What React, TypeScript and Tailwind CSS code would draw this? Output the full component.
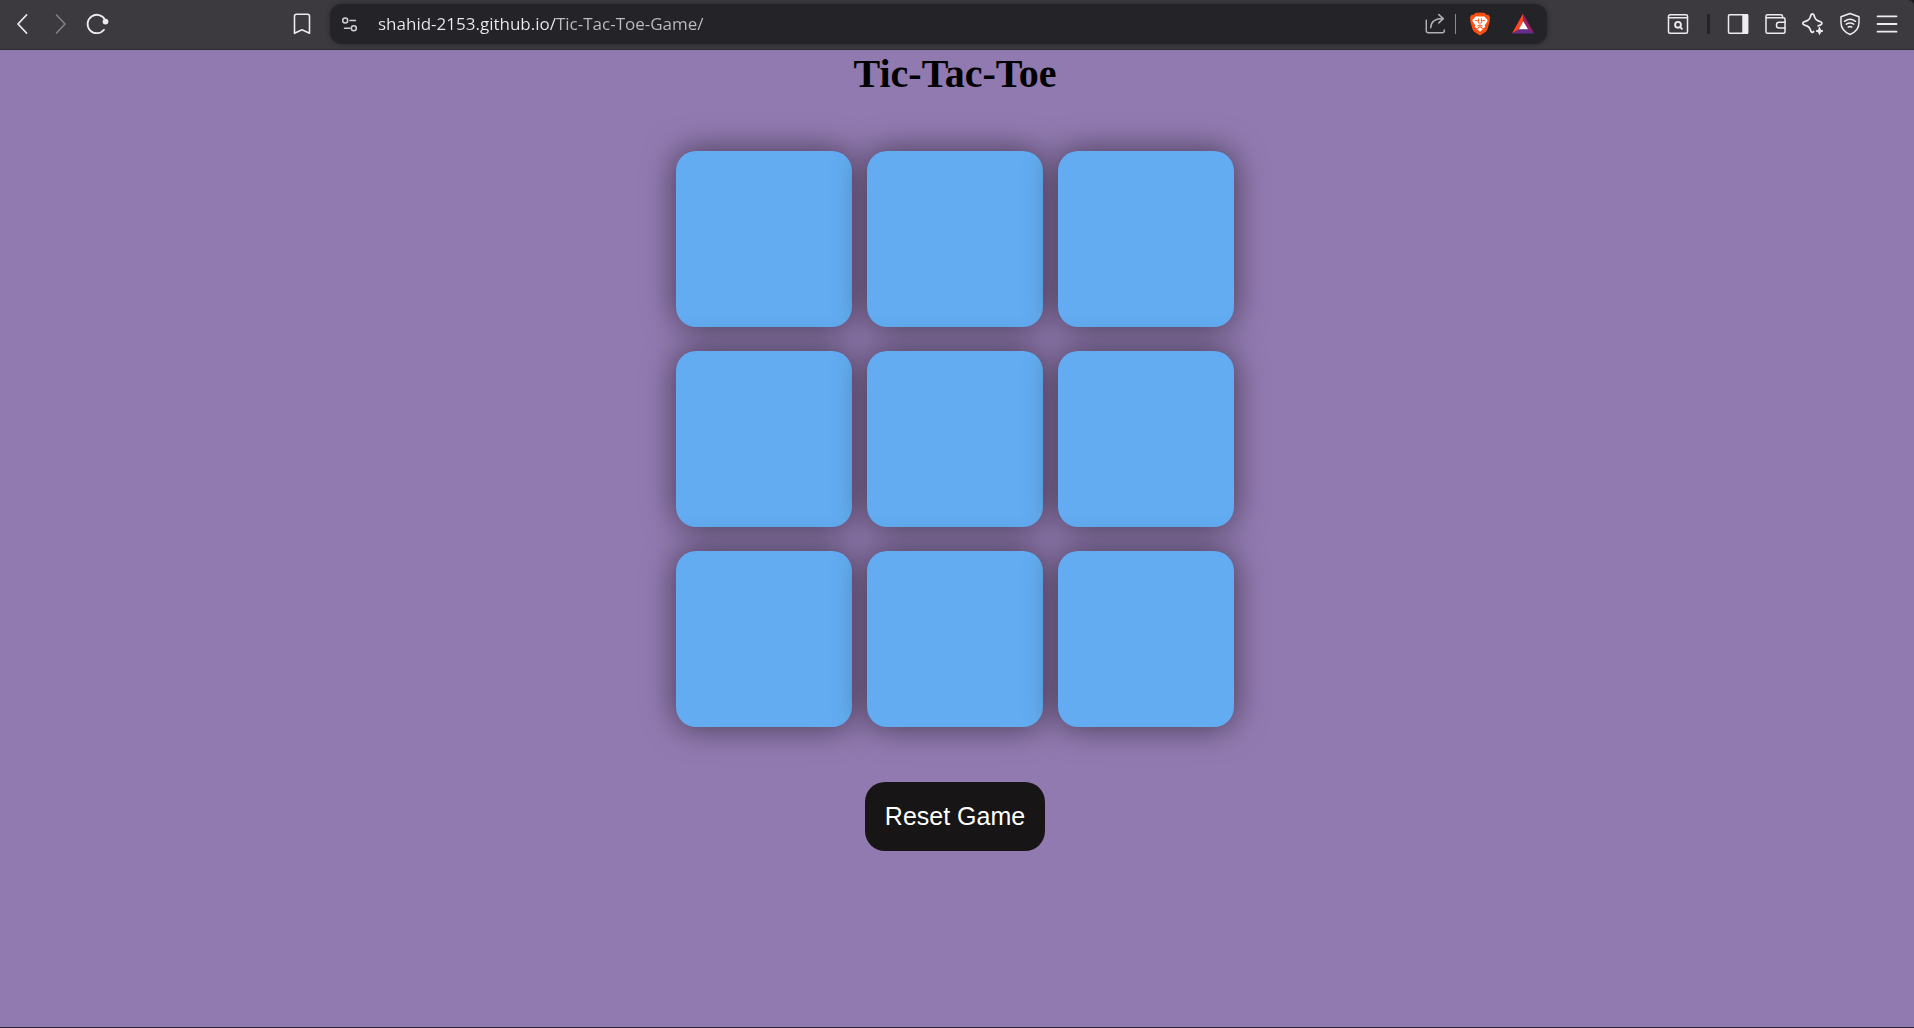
import { useState } from 'react'
import type { ReactNode } from 'react'

const WINS = [
  [0, 1, 2], [3, 4, 5], [6, 7, 8],
  [0, 3, 6], [1, 4, 7], [2, 5, 8],
  [0, 4, 8], [2, 4, 6],
]

function Icon({ children, stroke = 1.5 }: { children: ReactNode; stroke?: number }) {
  return (
    <svg
      viewBox="0 0 24 24"
      className="size-6 shrink-0 fill-none stroke-current"
      strokeWidth={stroke}
      strokeLinecap="round"
      strokeLinejoin="round"
      aria-hidden
    >
      {children}
    </svg>
  )
}

function IconButton({ label, className = '', children }: { label: string; className?: string; children: ReactNode }) {
  return (
    <button type="button" aria-label={label} className={className}>
      {children}
    </button>
  )
}

function AddressBar() {
  return (
    <div className="flex h-10 min-w-0 flex-1 items-center rounded-xl bg-[#242328] pr-3 pl-2 text-[#d0d0d5] shadow-[0_0_5px_#29282c]">
      <IconButton label="Site settings">
        <Icon>
          <circle cx="7.2" cy="8.6" r="2.5" />
          <path d="M12 8.600h5.500M6.500 16.200H12" />
          <circle cx="15.800" cy="16.200" r="2.500" />
        </Icon>
      </IconButton>
      <input
        type="text"
        aria-label="Address"
        defaultValue="shahid-2153.github.io/Tic-Tac-Toe-Game/"
        className="ml-4 h-7 min-w-0 flex-1 bg-linear-to-r from-[#ececf0] from-[178px] to-[#bdbdc2] to-[178px] bg-clip-text pb-0.5 font-['Open_Sans',sans-serif] text-[17px] text-transparent outline-none"
      />
      <IconButton label="Share" className="text-[#b0b0b5]">
        <Icon>
          <path d="M3.300 8.200v10.600a2 2 0 0 0 2 2h14a2 2 0 0 0 2-2V18" />
          <path d="M7.700 15.800c.300-5.500 4-9.200 12.400-9.200M15.800 2.600l4.500 4-4.500 4.300" />
        </Icon>
      </IconButton>
      <span className="mx-2 h-5 w-px bg-[#8a8a8f]" />
      <IconButton label="Brave Shields" className="ml-1">
        <svg viewBox="0 0 24 24" className="size-6" aria-hidden>
          <path
            fill="#fb4f12"
            d="M7.600.7h8.800l2 2.100 2-.1 1.800 3-.7 2 .4 1.400-2.500 8.200c-.3 1-1 1.900-1.900 2.600L12 23.400l-5.500-3.500a5 5 0 0 1-1.900-2.600L2.100 9.100l.4-1.400-.7-2 1.800-3 2 .1z"
          />
          <path
            fill="#fff"
            d="M8 4.200l2 .4h4l2-.4 3.600 3.800-.5 2-2.300 3.200.4 1.700-2.200 1.500-1.600-1.700-1.400-.5-1.400.5L9 16.400l-2.200-1.500.4-1.700L4.900 10l-.5-2z"
          />
          <path fill="#fff" d="M12 15.300l2.800 1.900L12 19.800l-2.800-2.600z" />
          <path fill="#fff" d="M10.800 11h2.400l1 2.500h-4.400z" />
          <path fill="none" stroke="#fb4f12" strokeWidth="1" d="M7 8.200l3 .8M17 8.200l-3 .8M10.700 6.500l-.2 3 .6 2.300M13.300 6.500l.2 3-.6 2.300M9.500 14l2.500-1 2.500 1" />
        </svg>
      </IconButton>
      <IconButton label="Brave Rewards" className="ml-[19px]">
        <svg viewBox="0 0 24 24" className="size-6" aria-hidden>
          <path fill="#ff4724" d="M12 1.800L1 21.500l7.300-4.300 4-7.700z" />
          <path fill="#9e1f63" d="M12 1.800l11.300 19.700-6.600-4.300-4.400-7.700z" />
          <path fill="#662d91" d="M1 21.500h22.300l-6.600-4.300H8.300z" />
          <path fill="#fff" d="M12.300 9.200L8 17.300h9z" />
        </svg>
      </IconButton>
    </div>
  )
}

function BrowserBar() {
  return (
    <header className="flex h-[50px] items-center rounded-tr-md border-b border-[#2f2e31] bg-[#3c3a3f] pb-px text-[#ececf0]">
      <nav aria-label="History" className="flex w-[330px] shrink-0 items-center pr-4 pl-3">
        <IconButton label="Back">
          <Icon stroke={1.8}>
            <path d="M14.500 3 6 12l8.500 9" />
          </Icon>
        </IconButton>
        <IconButton label="Forward" className="ml-3 text-[#818085]">
          <Icon stroke={1.6}>
            <path d="m8.500 3 8.500 9-8.500 9" />
          </Icon>
        </IconButton>
        <IconButton label="Reload" className="ml-[13px]">
          <Icon stroke={1.8}>
            <path d="M20 7.800A9.200 9.200 0 1 0 19 17.700" />
            <circle cx="20.500" cy="9.600" r="2" className="fill-current" />
          </Icon>
        </IconButton>
        <IconButton label="Bookmark" className="ml-auto">
          <Icon stroke={1.6}>
            <path d="M4.500 4.300a2 2 0 0 1 2-2h11a2 2 0 0 1 2 2v17L12 17.800l-7.500 3.500z" />
          </Icon>
        </IconButton>
      </nav>

      <AddressBar />

      <nav aria-label="Browser tools" className="flex w-[367px] shrink-0 items-center justify-end gap-[13px] pr-[15px]">
        <IconButton label="Search tabs">
          <Icon>
            <rect x="2.500" y="2.800" width="19" height="18.500" rx="1.500" />
            <path d="M2.500 5.800h19" />
            <circle cx="12" cy="12.800" r="2.900" strokeWidth="1.900" />
            <path d="m14.300 15.200 1.600 1.600" strokeWidth="1.900" />
          </Icon>
        </IconButton>
        <span className="mx-1 h-5 w-[3px] bg-[#242327]" />
        <IconButton label="Sidebar">
          <Icon>
            <rect x="1.500" y="2.800" width="19" height="18.500" rx="1" />
            <path d="M16 2.800h4.500v18.500H16z" className="fill-current" />
          </Icon>
        </IconButton>
        <IconButton label="Wallet">
          <Icon>
            <path d="M2 5.800V4.300a1.500 1.500 0 0 1 1.500-1.500H17a1.500 1.500 0 0 1 1.500 1.500v1.500" />
            <path d="M2 5.800h17.500A1.500 1.500 0 0 1 21 7.300v12.500a1.500 1.500 0 0 1-1.500 1.500h-16A1.500 1.500 0 0 1 2 19.800z" />
            <path d="M21 10.300h-6a2.500 2.500 0 0 0-2.500 2.500v.8a2.500 2.500 0 0 0 2.500 2.500h6" />
          </Icon>
        </IconButton>
        <IconButton label="Leo AI">
          <Icon stroke={1.7}>
            <path d="M12.600 19.500c-.7 1.300-2.100 1.100-2.600-.1l-1-2.500a5 5 0 0 0-2.800-2.800l-3.500-1.400c-1.200-.5-1.200-2.200 0-2.700l3.500-1.400A5 5 0 0 0 9 5.800l1-2.900c.5-1.300 2.300-1.300 2.800 0l1.100 2.900a5 5 0 0 0 2.800 2.800l3.300 1.400c1.200.5 1.200 2.200 0 2.700l-2.800 1.200" />
            <path d="M18.500 15.500l1 2.500 2.500 1-2.500 1-1 2.500-1-2.500-2.500-1 2.500-1z" className="fill-current" strokeWidth="1" />
          </Icon>
        </IconButton>
        <IconButton label="VPN">
          <Icon>
            <path d="M12 1.500l9 3.300v5.700c0 5.300-3.400 9.600-9 12-5.600-2.400-9-6.700-9-12V4.800z" />
            <path d="M6.500 9.300c3.400-2.500 7.600-2.500 11 0M8.300 12.200c2.300-1.600 5.100-1.600 7.400 0M10.300 15c1.100-.7 2.300-.7 3.400 0" />
          </Icon>
        </IconButton>
        <IconButton label="Menu">
          <Icon stroke={1.8}>
            <path d="M2.500 4.300h19M2.500 12h19M2.500 19.700h19" />
          </Icon>
        </IconButton>
      </nav>
    </header>
  )
}

export default function App() {
  const [cells, setCells] = useState<string[]>(Array(9).fill(''))
  const turn = cells.filter(Boolean).length % 2 === 0 ? 'O' : 'X'
  const over = WINS.some(([a, b, c]) => cells[a] && cells[a] === cells[b] && cells[a] === cells[c])

  function play(i: number) {
    if (over || cells[i]) return
    setCells(cells.map((c, j) => (j === i ? turn : c)))
  }

  return (
    <div className="flex min-h-screen flex-col bg-[#1c1b1f]">
      <BrowserBar />
      <main className="flex flex-1 flex-col items-center gap-[55px] border-b border-[#2a2036] bg-[#917ab0] pr-1">
        <h1 className="pt-0.5 font-['Liberation_Serif',serif] text-[40px] leading-11 font-bold text-black">Tic-Tac-Toe</h1>
        <div className="grid grid-cols-3 gap-x-[15px] gap-y-6">
          {cells.map((mark, i) => (
            <button
              key={i}
              type="button"
              aria-label={`Cell ${i + 1}`}
              onClick={() => play(i)}
              className="size-44 rounded-[20px] bg-[#63acf1] font-['Liberation_Sans',sans-serif] text-7xl text-[#b0413e] shadow-[0_0_32px_rgba(0,0,0,0.55)]"
            >
              {mark}
            </button>
          ))}
        </div>
        <button
          type="button"
          onClick={() => setCells(Array(9).fill(''))}
          className="rounded-[20px] bg-[#171515] p-5 font-['Liberation_Sans',sans-serif] text-[25px] leading-[29px] text-white"
        >
          Reset Game
        </button>
      </main>
    </div>
  )
}
